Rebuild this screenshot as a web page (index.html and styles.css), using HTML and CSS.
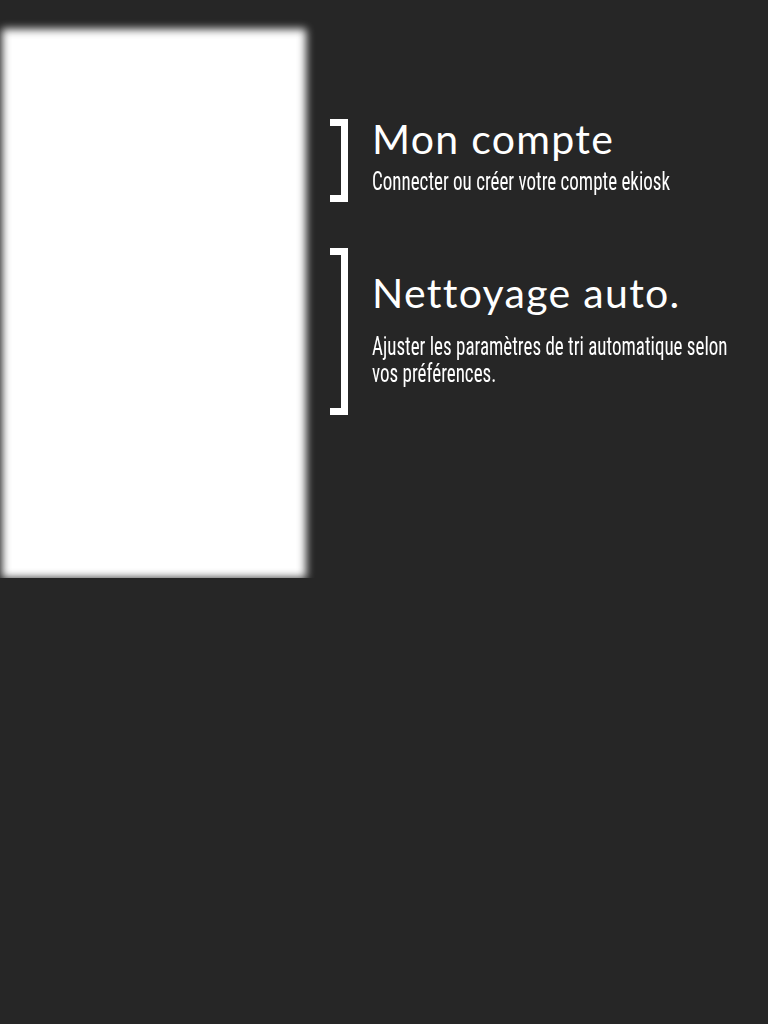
FILE: index.html
```html
<!DOCTYPE html>
<html lang="fr">
<head>
<meta charset="utf-8">
<title>Réglages</title>
<link rel="stylesheet" href="styles.css">
</head>
<body>
<div class="page">
  <div class="preview"></div>
  <div class="menu">
    <div class="item item-account">
      <div class="bracket"></div>
      <div class="text">
        <div class="title">Mon compte</div>
        <div class="sub">Connecter ou créer votre compte ekiosk</div>
      </div>
    </div>
    <div class="item item-clean">
      <div class="bracket"></div>
      <div class="text">
        <div class="title">Nettoyage auto.</div>
        <div class="sub">Ajuster les paramètres de tri automatique selon vos préférences.</div>
      </div>
    </div>
  </div>
</div>
</body>
</html>
```

FILE: styles.css
```css
html, body {
  margin: 0;
  padding: 0;
  background: #262626;
  height: 100%;
}
body {
  color: #fff;
  font-family: "Lato", "DejaVu Sans", sans-serif;
  overflow: hidden;
}
.page {
  display: flex;
  align-items: flex-start;
  padding-top: 29px;
  overflow: hidden;
}
.preview {
  width: 304px;
  height: 549px;
  margin-left: 2px;
  background: #fff;
  filter: blur(4px);
  flex: none;
}
.menu {
  margin-left: 24px;
  padding-top: 90px;
  display: flex;
  flex-direction: column;
  gap: 46px;
}
.item {
  display: flex;
  align-items: flex-start;
  gap: 24px;
}
.bracket {
  width: 11px;
  border: 7px solid #fff;
  border-left: none;
  flex: none;
}
.item-account .bracket { height: 69px; }
.item-clean .bracket { height: 153px; }
.item-account .text { margin-top: -4.5px; }
.item-clean .text { margin-top: 21px; }
.title {
  font-size: 41px;
  line-height: 48px;
  letter-spacing: 1.3px;
  white-space: nowrap;
}
.sub {
  font-family: "Roboto Condensed", "Liberation Sans Narrow", "Roboto", sans-serif;
  font-stretch: condensed;
  font-size: 25px;
  line-height: 27px;
  width: 480px;
  transform: scaleX(0.76);
  transform-origin: left top;
}
.item-account .sub { margin-top: 5px; }
.item-clean .sub { margin-top: 16px; }
```
